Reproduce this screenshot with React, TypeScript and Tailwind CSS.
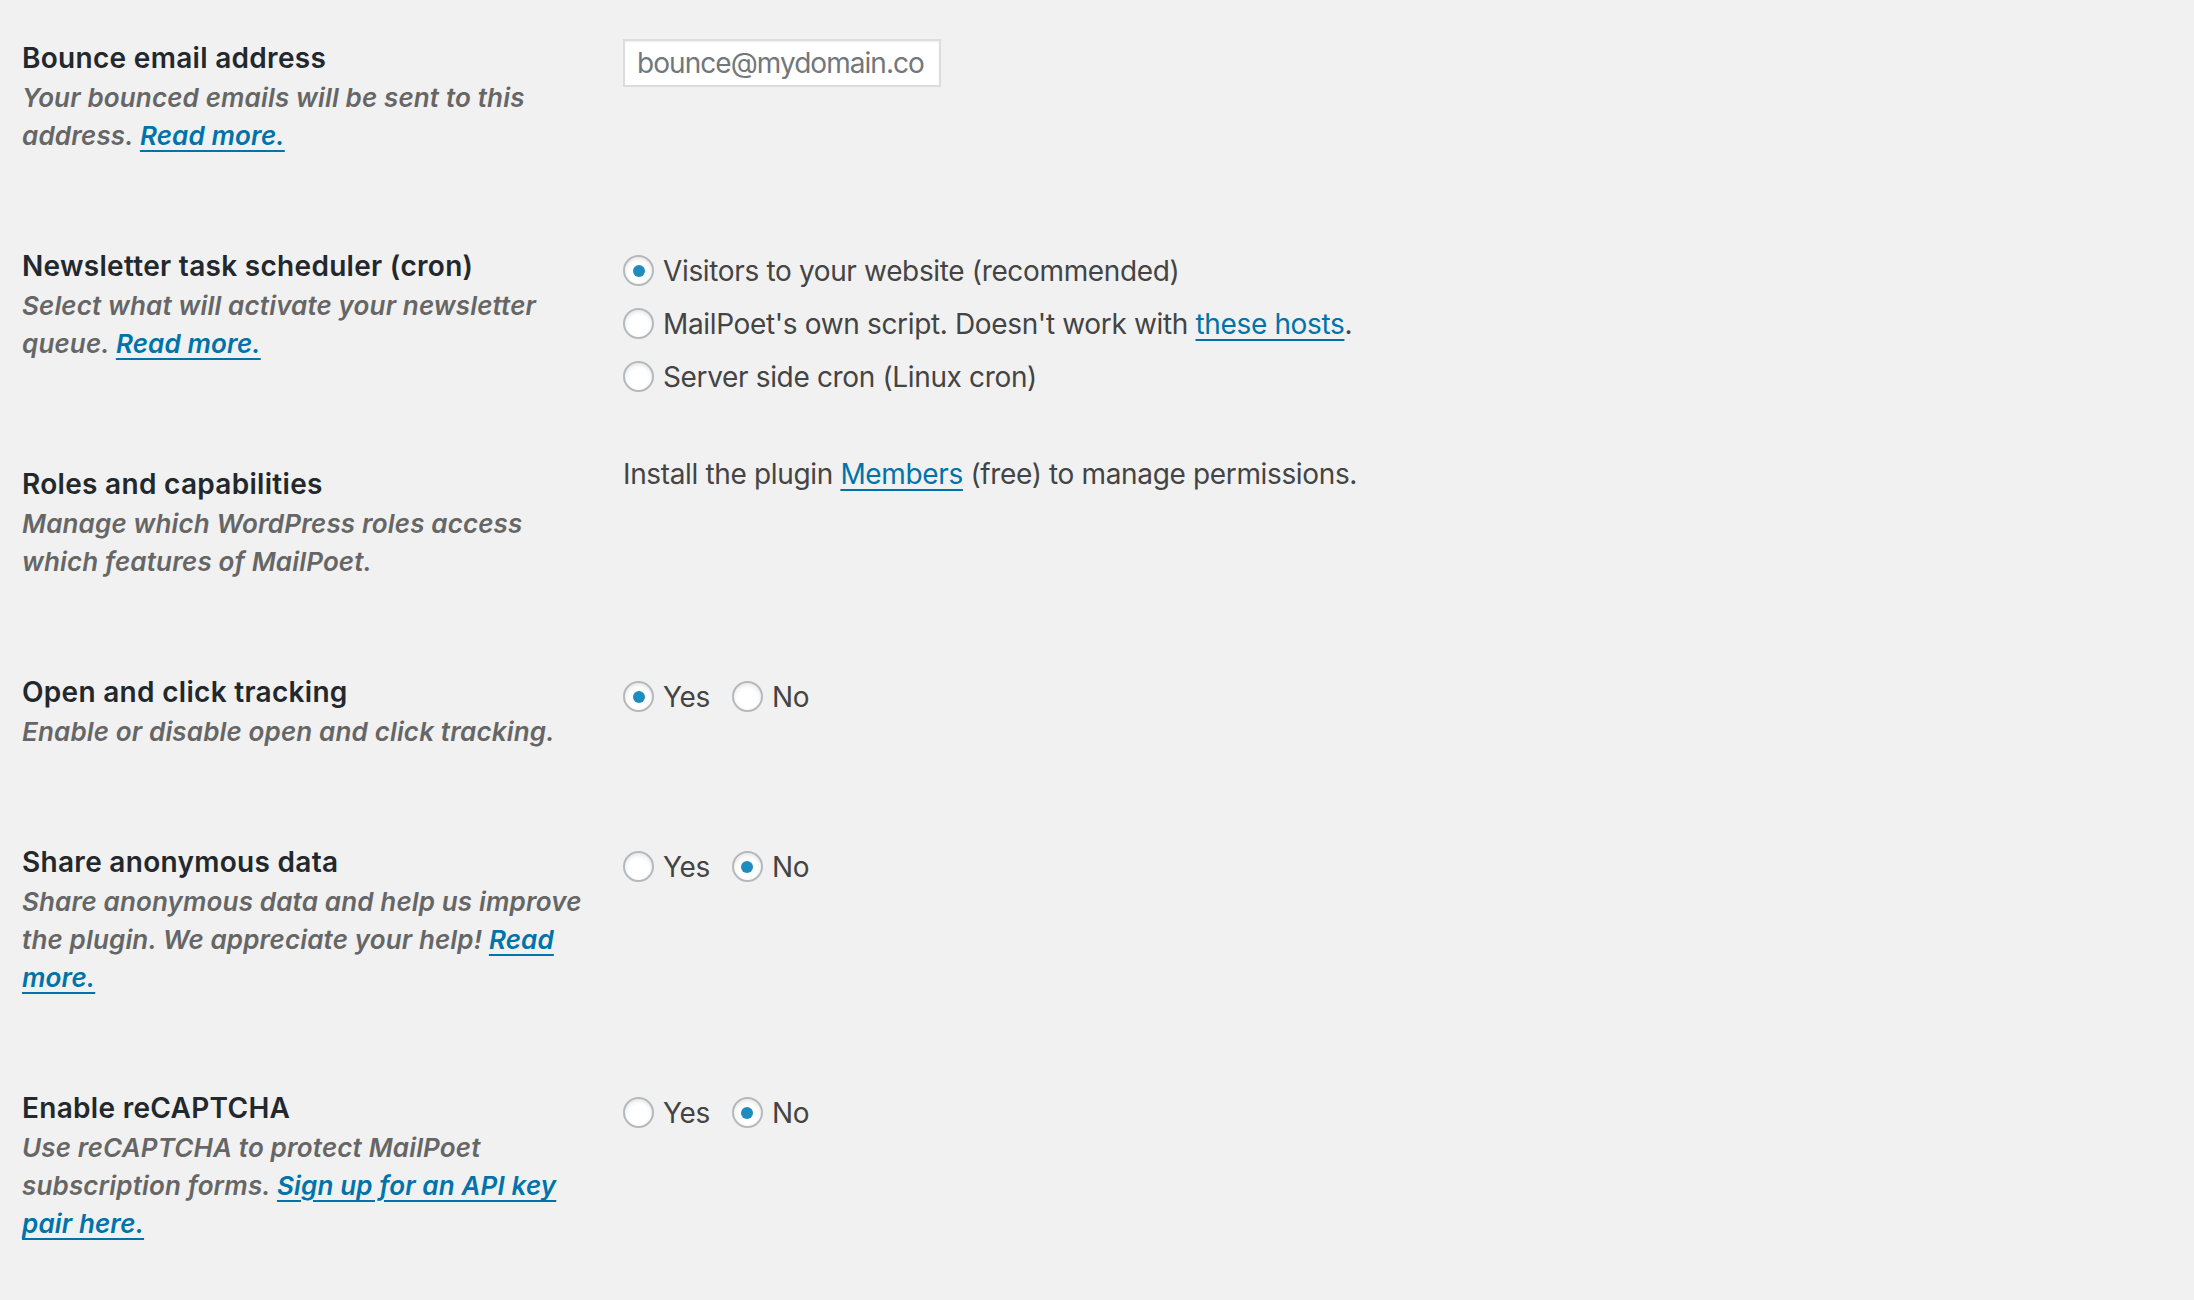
import type { ReactNode } from "react";

const link = "text-[#0073aa] underline decoration-2 underline-offset-[5px]";

function Radio({ checked }: { checked?: boolean }) {
  return (
    <span className="flex h-[31px] w-[31px] shrink-0 items-center justify-center rounded-full border-2 border-[#b4b9be] bg-white shadow-[inset_0_2px_4px_rgba(0,0,0,0.1)]">
      {checked && <span className="h-[12px] w-[12px] rounded-full bg-[#1e8cbe]" />}
    </span>
  );
}

function Option({ checked, children }: { checked?: boolean; children: ReactNode }) {
  return (
    <label className="flex h-[53px] items-center gap-[9px]">
      <Radio checked={checked} />
      <span>{children}</span>
    </label>
  );
}

function YesNo({ yes }: { yes: boolean }) {
  return (
    <div className="flex gap-[22px] pt-[6px]">
      <Option checked={yes}>Yes</Option>
      <Option checked={!yes}>No</Option>
    </div>
  );
}

function Row({ title, desc, children }: { title: string; desc: ReactNode; children: ReactNode }) {
  return (
    <div className="flex">
      <div className="w-[600px] shrink-0 pb-[53px] pl-[22px] pr-[8px] pt-[40px]">
        <div className="text-[28px] font-semibold leading-[36px] tracking-[0.3px] text-[#23282d]">{title}</div>
        <p className="mt-[3px] text-[26px] font-semibold italic leading-[38px] tracking-[0.15px] text-[#666]">{desc}</p>
      </div>
      <div className="pb-[23px] pl-[23px] pt-[30px] text-[28px] leading-[36px] tracking-[-0.35px] text-[#444]">
        {children}
      </div>
    </div>
  );
}

export default function App() {
  return (
    <div className="min-h-screen bg-[#f1f1f1] font-['Inter','Noto_Sans',sans-serif]">
      <Row
        title="Bounce email address"
        desc={
          <>
            Your bounced emails will be sent to this address. <a className={link}>Read more.</a>
          </>
        }
      >
        <div className="mt-[9px] flex h-[48px] w-[318px] items-center border-2 border-[#ddd] bg-white pl-[12px] pr-[15px] tracking-[-0.95px] text-[#72777c] shadow-[inset_0_1px_2px_rgba(0,0,0,0.07)]">
          <div className="overflow-hidden whitespace-nowrap">bounce@mydomain.com</div>
        </div>
      </Row>

      <Row
        title="Newsletter task scheduler (cron)"
        desc={
          <>
            Select what will activate your newsletter queue. <a className={link}>Read more.</a>
          </>
        }
      >
        <div className="flex flex-col pt-[6px]">
          <Option checked>Visitors to your website (recommended)</Option>
          <Option>
            MailPoet's own script. Doesn't work with <a className={link}>these hosts</a>.
          </Option>
          <Option>Server side cron (Linux cron)</Option>
        </div>
      </Row>

      <Row title="Roles and capabilities" desc="Manage which WordPress roles access which features of MailPoet.">
        <p>
          Install the plugin <a className={link}>Members</a> (free) to manage permissions.
        </p>
      </Row>

      <Row title="Open and click tracking" desc="Enable or disable open and click tracking.">
        <YesNo yes />
      </Row>

      <Row
        title="Share anonymous data"
        desc={
          <>
            Share anonymous data and help us improve the plugin. We appreciate your help!{" "}
            <a className={link}>Read more.</a>
          </>
        }
      >
        <YesNo yes={false} />
      </Row>

      <Row
        title="Enable reCAPTCHA"
        desc={
          <>
            Use reCAPTCHA to protect MailPoet subscription forms.{" "}
            <a className={link}>Sign up for an API key pair here.</a>
          </>
        }
      >
        <YesNo yes={false} />
      </Row>
    </div>
  );
}
